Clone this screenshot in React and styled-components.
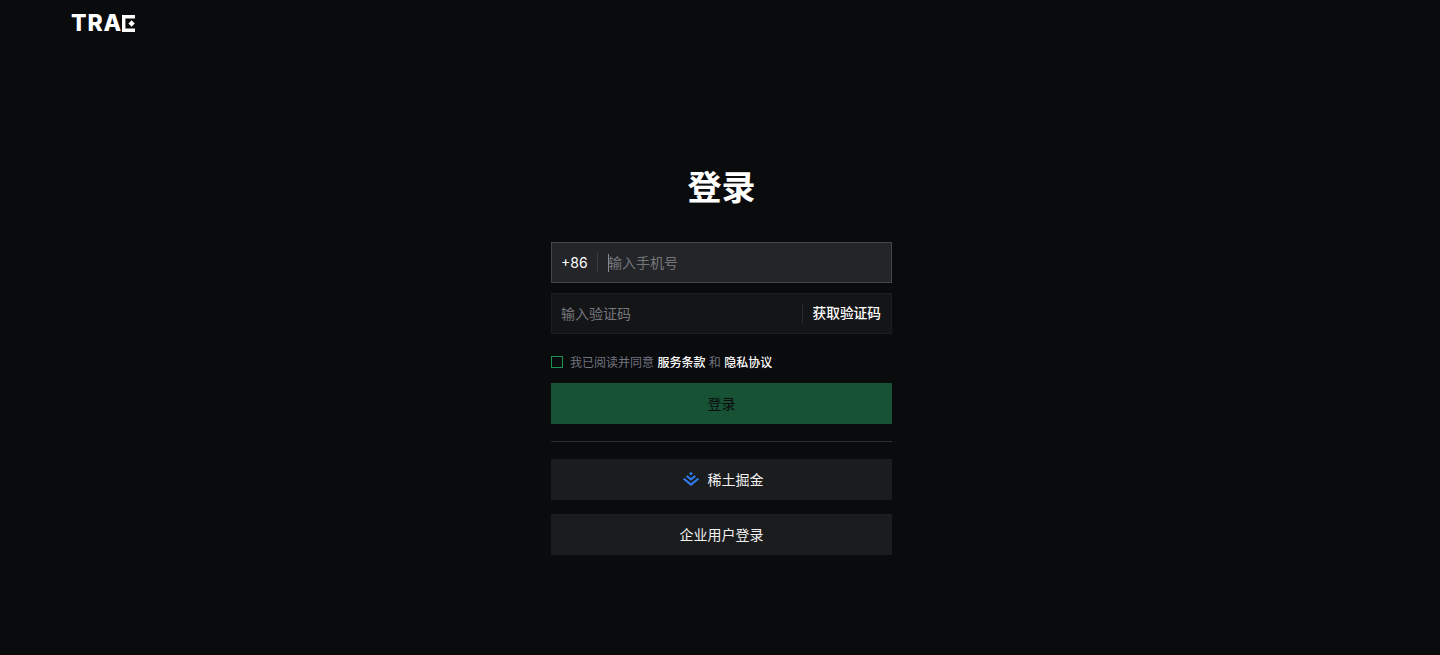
import React from "react";
import styled, { createGlobalStyle } from "styled-components";

const GlobalStyle = createGlobalStyle`
  html, body {
    margin: 0;
    padding: 0;
    height: 100%;
    background: #0a0b0d;
  }
  body {
    font-family: Inter, "Noto Sans CJK SC", sans-serif;
    overflow: hidden;
  }
  * {
    box-sizing: border-box;
  }
`;

const Page = styled.div`
  height: 655px;
  background: #0a0b0d;
  display: flex;
  flex-direction: column;
`;

const Header = styled.header`
  height: 48px;
  padding: 14px 0 0 71px;
`;

const Logo = styled.div`
  display: flex;
  align-items: center;
  height: 19px;
  color: #fff;
`;

const LogoText = styled.span`
  font-family: Inter, sans-serif;
  font-size: 23px;
  font-weight: 800;
  line-height: 19px;
  letter-spacing: 0.9px;
`;

const Content = styled.div`
  display: flex;
  justify-content: center;
  padding: 116px 0 0 3px;
`;

const Main = styled.main`
  width: 341px;
`;

const Title = styled.h1`
  margin: 0 0 30px;
  font-size: 34px;
  line-height: 48px;
  font-weight: 700;
  color: #fff;
  text-align: center;
`;

const Field = styled.div`
  display: flex;
  align-items: center;
  height: 41px;
  margin-bottom: 10px;
  padding: 0 10px 0 9px;
  background: ${(p) => (p.$active ? "#242528" : "#141517")};
  border: 1px solid ${(p) => (p.$active ? "#45464a" : "#1c1d20")};
`;

const Prefix = styled.span`
  font-size: 14px;
  font-weight: 400;
  color: #fff;
  width: 27px;
  padding-bottom: 1px;
`;

const Sep = styled.span`
  width: 1px;
  height: 20px;
  background: ${(p) => (p.$active ? "#3a3b3f" : "#28292c")};
  margin: 0 10px 0 ${(p) => (p.$active ? "9px" : "0")};
  flex: none;
`;

const Caret = styled.span`
  width: 1px;
  height: 18px;
  background: #8a8b90;
  flex: none;
  margin-right: -1px;
`;

const Placeholder = styled.span`
  flex: 1;
  font-size: 14px;
  color: #75767c;
  line-height: 20px;
`;

const SendCode = styled.button`
  border: 0;
  padding: 0 0 2px;
  background: transparent;
  color: #fff;
  font: 500 13.7px Inter, "Noto Sans CJK SC", sans-serif;
  line-height: 18px;
  white-space: nowrap;
`;

const AgreeRow = styled.label`
  display: flex;
  align-items: center;
  height: 18px;
  margin: 19px 0 12px;
  font-size: 12px;
  color: #727480;
  gap: 7px;
`;

const Box = styled.span`
  width: 12px;
  height: 12px;
  border: 1px solid #1f9152;
  flex: none;
`;

const AgreeText = styled.span`
  white-space: nowrap;
  padding-bottom: 2px;
`;

const Link = styled.a`
  color: #fff;
  font-weight: 500;
`;

const Submit = styled.button`
  display: block;
  width: 100%;
  height: 41px;
  padding: 0 0 2px;
  border: 0;
  background: #175235;
  color: #0a0b0d;
  font: 400 14px Inter, "Noto Sans CJK SC", sans-serif;
`;

const Divider = styled.hr`
  margin: 17px 0 17px;
  border: 0;
  height: 1px;
  background: #2e2f33;
`;

const AltButton = styled.button`
  display: flex;
  align-items: center;
  justify-content: center;
  gap: 8px;
  width: 100%;
  height: 41px;
  margin-bottom: 14px;
  padding: 0 0 2px;
  border: 0;
  background: #1b1c1e;
  color: #f2f2f3;
  font: 400 14px Inter, "Noto Sans CJK SC", sans-serif;

  svg {
    margin-left: 2px;
  }
`;

const LogoMark = () => (
  <svg width="13" height="17" viewBox="0 0 13 17" fill="#fff">
    <path d="M0 0h13v3.4H3.4v10.2H13V17H0z" />
    <path d="M9.6 5.3l3.2 3.2-3.2 3.2-3.2-3.2z" />
  </svg>
);

const JuejinIcon = () => (
  <svg width="18" height="14" viewBox="0 0 18 14" fill="#2f7cf0">
    <path d="M9 0l2 1.6L9 3.2 7 1.6z" />
    <path d="M9 6.1l3.5-2.8 1.6 1.3L9 8.7 3.9 4.6l1.6-1.3z" />
    <path d="M9 11.2l6.5-5.2L17.2 7.3 9 14 .8 7.3 2.5 6z" />
  </svg>
);

export default function App() {
  return (
    <Page>
      <GlobalStyle />
      <Header>
        <Logo>
          <LogoText>TRA</LogoText>
          <LogoMark />
        </Logo>
      </Header>
      <Content>
        <Main>
          <Title>登录</Title>
          <Field $active>
            <Prefix>+86</Prefix>
            <Sep $active />
            <Caret />
            <Placeholder>输入手机号</Placeholder>
          </Field>
          <Field>
            <Placeholder>输入验证码</Placeholder>
            <Sep />
            <SendCode>获取验证码</SendCode>
          </Field>
          <AgreeRow>
            <Box />
            <AgreeText>
              我已阅读并同意 <Link>服务条款</Link> 和 <Link>隐私协议</Link>
            </AgreeText>
          </AgreeRow>
          <Submit>登录</Submit>
          <Divider />
          <AltButton>
            <JuejinIcon />
            稀土掘金
          </AltButton>
          <AltButton>企业用户登录</AltButton>
        </Main>
      </Content>
    </Page>
  );
}
